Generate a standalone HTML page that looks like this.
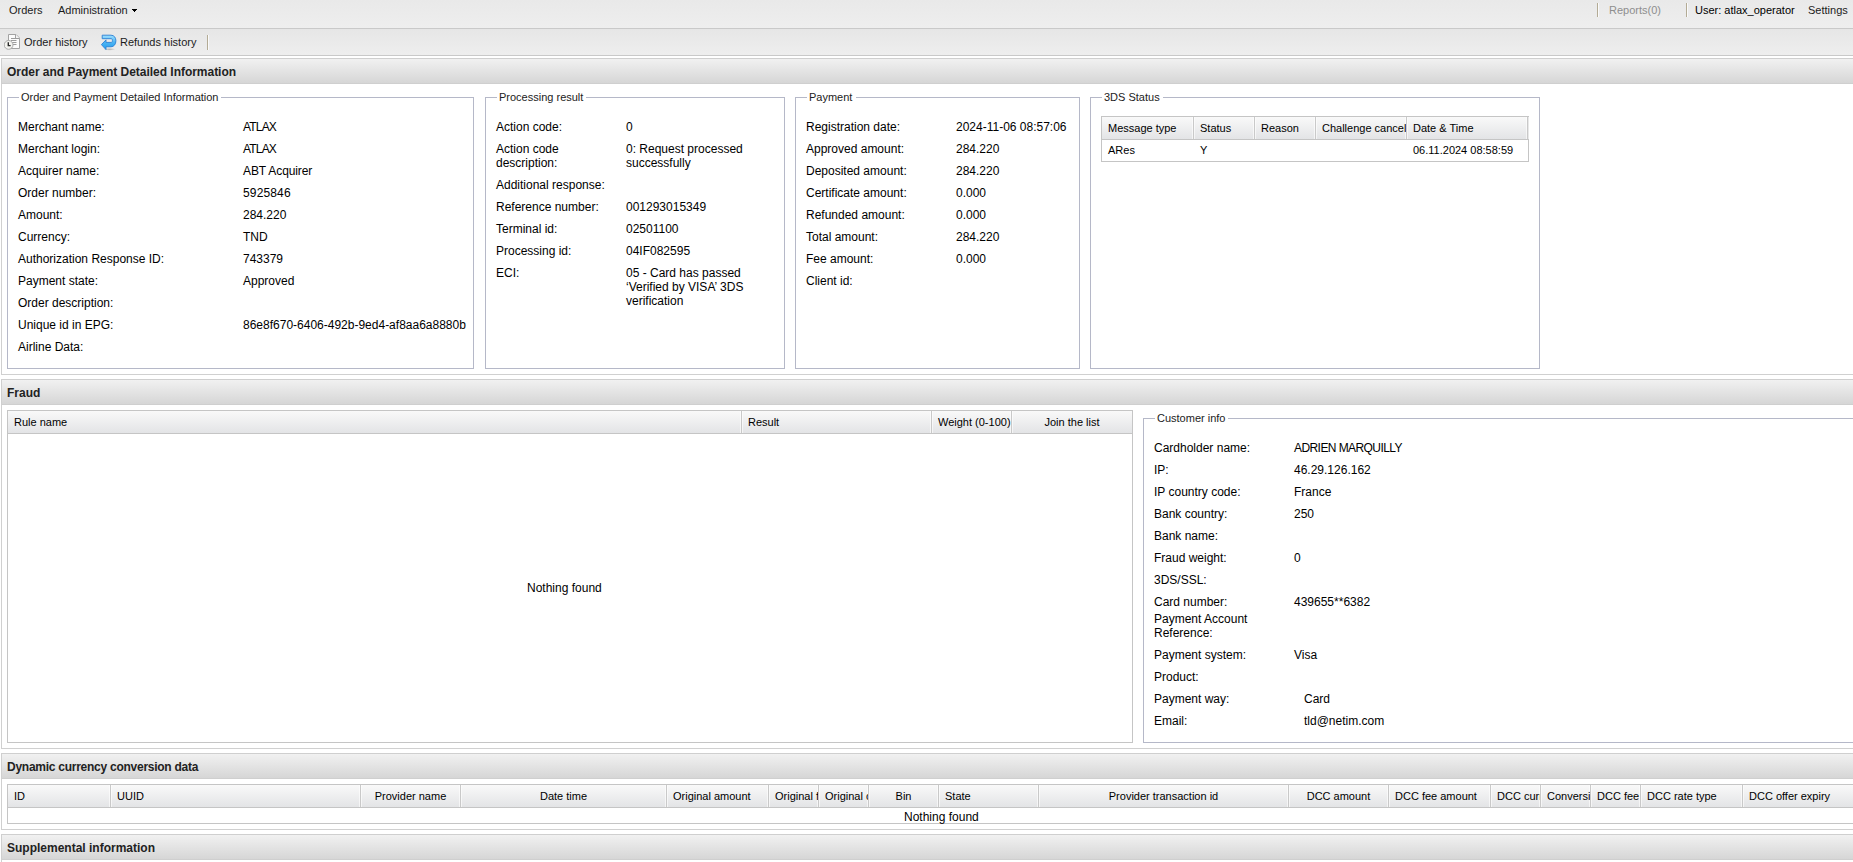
<!DOCTYPE html>
<html><head><meta charset="utf-8"><title>Order</title>
<style>
*{box-sizing:border-box}
html,body{margin:0;padding:0;background:#fff;width:1853px;height:862px;overflow:hidden;position:relative}
body{font-family:"Liberation Sans",sans-serif;font-size:12px;color:#000;line-height:14px}
.a{position:absolute;white-space:nowrap;line-height:14px}
.bx{position:absolute}
</style></head><body>
<div class="bx" style="left:0px;top:0px;width:1853px;height:28px;background:linear-gradient(#e9e9e9,#eeeeee)"></div>
<div class="bx" style="left:0px;top:28px;width:1853px;height:28px;border-top:1px solid #c9c9c9;border-bottom:1px solid #c9c9c9;background:linear-gradient(#e6e6e6,#eeeeee)"></div>
<div class="bx" style="left:1597px;top:3px;width:1px;height:14px;background:#b3ab95"></div>
<div class="bx" style="left:1598px;top:3px;width:1px;height:14px;background:#fafafa"></div>
<div class="bx" style="left:1686px;top:3px;width:1px;height:14px;background:#b3ab95"></div>
<div class="bx" style="left:1687px;top:3px;width:1px;height:14px;background:#fafafa"></div>
<div class="bx" style="left:207px;top:35px;width:1px;height:15px;background:#b3ab95"></div>
<div class="bx" style="left:208px;top:35px;width:1px;height:15px;background:#fafafa"></div>
<div class="bx" style="left:1px;top:58px;width:1852px;height:26px;border:1px solid #cfcfcf;border-right:none;background:linear-gradient(#f1f1f1,#d6d6d6)"></div>
<div class="bx" style="left:1px;top:84px;width:1852px;height:291px;border:1px solid #d0d0d0;border-top:none;border-right:none;background:#fff"></div>
<div class="bx" style="left:1px;top:379px;width:1852px;height:26px;border:1px solid #cfcfcf;border-right:none;background:linear-gradient(#f1f1f1,#d6d6d6)"></div>
<div class="bx" style="left:1px;top:405px;width:1852px;height:344px;border:1px solid #d0d0d0;border-top:none;border-right:none;background:#fff"></div>
<div class="bx" style="left:1px;top:753px;width:1852px;height:26px;border:1px solid #cfcfcf;border-right:none;background:linear-gradient(#f1f1f1,#d6d6d6)"></div>
<div class="bx" style="left:1px;top:779px;width:1852px;height:51px;border:1px solid #d0d0d0;border-top:none;border-right:none;background:#fff"></div>
<div class="bx" style="left:1px;top:834px;width:1852px;height:26px;border:1px solid #cfcfcf;border-right:none;background:linear-gradient(#f1f1f1,#d6d6d6)"></div>
<div class="bx" style="left:1px;top:860px;width:1852px;height:10px;border-left:1px solid #d0d0d0;background:#fff"></div>
<div class="bx" style="left:7px;top:97px;width:467px;height:272px;border:1px solid #b5b8c8;"></div>
<div class="bx" style="left:19px;top:95px;width:202px;height:4px;background:#fff"></div>
<div class="bx" style="left:485px;top:97px;width:300px;height:272px;border:1px solid #b5b8c8;"></div>
<div class="bx" style="left:497px;top:95px;width:89px;height:4px;background:#fff"></div>
<div class="bx" style="left:795px;top:97px;width:285px;height:272px;border:1px solid #b5b8c8;"></div>
<div class="bx" style="left:807px;top:95px;width:49px;height:4px;background:#fff"></div>
<div class="bx" style="left:1090px;top:97px;width:450px;height:272px;border:1px solid #b5b8c8;"></div>
<div class="bx" style="left:1102px;top:95px;width:61px;height:4px;background:#fff"></div>
<div class="bx" style="left:1143px;top:418px;width:718px;height:325px;border:1px solid #b5b8c8;border-right:none;"></div>
<div class="bx" style="left:1155px;top:416px;width:73px;height:4px;background:#fff"></div>
<div class="bx" style="left:1101px;top:116px;width:428px;height:46px;border:1px solid #c5c5c5;background:#fff;"></div>
<div class="bx" style="left:1102px;top:117px;width:426px;height:22px;background:linear-gradient(#f9f9f9,#e3e4e6)"></div>
<div class="bx" style="left:1102px;top:139px;width:426px;height:1px;background:#c5c5c5"></div>
<div class="bx" style="left:1192px;top:117px;width:1px;height:22px;background:rgba(255,255,255,0.6)"></div>
<div class="bx" style="left:1194px;top:117px;width:1px;height:22px;background:rgba(255,255,255,0.6)"></div>
<div class="bx" style="left:1193px;top:117px;width:1px;height:22px;background:#c9c9c9"></div>
<div class="bx" style="left:1253px;top:117px;width:1px;height:22px;background:rgba(255,255,255,0.6)"></div>
<div class="bx" style="left:1255px;top:117px;width:1px;height:22px;background:rgba(255,255,255,0.6)"></div>
<div class="bx" style="left:1254px;top:117px;width:1px;height:22px;background:#c9c9c9"></div>
<div class="bx" style="left:1314px;top:117px;width:1px;height:22px;background:rgba(255,255,255,0.6)"></div>
<div class="bx" style="left:1316px;top:117px;width:1px;height:22px;background:rgba(255,255,255,0.6)"></div>
<div class="bx" style="left:1315px;top:117px;width:1px;height:22px;background:#c9c9c9"></div>
<div class="bx" style="left:1405px;top:117px;width:1px;height:22px;background:rgba(255,255,255,0.6)"></div>
<div class="bx" style="left:1407px;top:117px;width:1px;height:22px;background:rgba(255,255,255,0.6)"></div>
<div class="bx" style="left:1406px;top:117px;width:1px;height:22px;background:#c9c9c9"></div>
<div class="bx" style="left:1526px;top:117px;width:1px;height:22px;background:rgba(255,255,255,0.6)"></div>
<div class="bx" style="left:1528px;top:117px;width:1px;height:22px;background:rgba(255,255,255,0.6)"></div>
<div class="bx" style="left:1527px;top:117px;width:1px;height:22px;background:#c9c9c9"></div>
<div class="a" style="left:1102px;top:121px;width:91px;overflow:hidden;font-size:11px;padding-left:6px">Message type</div>
<div class="a" style="left:1194px;top:121px;width:60px;overflow:hidden;font-size:11px;padding-left:6px">Status</div>
<div class="a" style="left:1255px;top:121px;width:60px;overflow:hidden;font-size:11px;padding-left:6px">Reason</div>
<div class="a" style="left:1316px;top:121px;width:90px;overflow:hidden;font-size:11px;padding-left:6px">Challenge cancel</div>
<div class="a" style="left:1407px;top:121px;width:120px;overflow:hidden;font-size:11px;padding-left:6px">Date &amp; Time</div>
<div class="a" style="left:1528px;top:121px;width:0px;overflow:hidden;font-size:11px;padding-left:6px"></div>
<div class="bx" style="left:7px;top:410px;width:1126px;height:333px;border:1px solid #c5c5c5;background:#fff;"></div>
<div class="bx" style="left:8px;top:411px;width:1124px;height:22px;background:linear-gradient(#f9f9f9,#e3e4e6)"></div>
<div class="bx" style="left:8px;top:433px;width:1124px;height:1px;background:#c5c5c5"></div>
<div class="bx" style="left:740px;top:411px;width:1px;height:22px;background:rgba(255,255,255,0.6)"></div>
<div class="bx" style="left:742px;top:411px;width:1px;height:22px;background:rgba(255,255,255,0.6)"></div>
<div class="bx" style="left:741px;top:411px;width:1px;height:22px;background:#c9c9c9"></div>
<div class="bx" style="left:930px;top:411px;width:1px;height:22px;background:rgba(255,255,255,0.6)"></div>
<div class="bx" style="left:932px;top:411px;width:1px;height:22px;background:rgba(255,255,255,0.6)"></div>
<div class="bx" style="left:931px;top:411px;width:1px;height:22px;background:#c9c9c9"></div>
<div class="bx" style="left:1010px;top:411px;width:1px;height:22px;background:rgba(255,255,255,0.6)"></div>
<div class="bx" style="left:1012px;top:411px;width:1px;height:22px;background:rgba(255,255,255,0.6)"></div>
<div class="bx" style="left:1011px;top:411px;width:1px;height:22px;background:#c9c9c9"></div>
<div class="a" style="left:8px;top:415px;width:733px;overflow:hidden;font-size:11px;padding-left:6px">Rule name</div>
<div class="a" style="left:742px;top:415px;width:189px;overflow:hidden;font-size:11px;padding-left:6px">Result</div>
<div class="a" style="left:932px;top:415px;width:79px;overflow:hidden;font-size:11px;padding-left:6px">Weight (0-100)</div>
<div class="a" style="left:1012px;top:415px;width:120px;overflow:hidden;font-size:11px;text-align:center">Join the list</div>
<div class="bx" style="left:7px;top:784px;width:1854px;height:40px;border:1px solid #c5c5c5;background:#fff;border-right:none;"></div>
<div class="bx" style="left:8px;top:785px;width:1853px;height:22px;background:linear-gradient(#f9f9f9,#e3e4e6)"></div>
<div class="bx" style="left:8px;top:807px;width:1853px;height:1px;background:#c5c5c5"></div>
<div class="bx" style="left:109px;top:785px;width:1px;height:22px;background:rgba(255,255,255,0.6)"></div>
<div class="bx" style="left:111px;top:785px;width:1px;height:22px;background:rgba(255,255,255,0.6)"></div>
<div class="bx" style="left:110px;top:785px;width:1px;height:22px;background:#c9c9c9"></div>
<div class="bx" style="left:359px;top:785px;width:1px;height:22px;background:rgba(255,255,255,0.6)"></div>
<div class="bx" style="left:361px;top:785px;width:1px;height:22px;background:rgba(255,255,255,0.6)"></div>
<div class="bx" style="left:360px;top:785px;width:1px;height:22px;background:#c9c9c9"></div>
<div class="bx" style="left:459px;top:785px;width:1px;height:22px;background:rgba(255,255,255,0.6)"></div>
<div class="bx" style="left:461px;top:785px;width:1px;height:22px;background:rgba(255,255,255,0.6)"></div>
<div class="bx" style="left:460px;top:785px;width:1px;height:22px;background:#c9c9c9"></div>
<div class="bx" style="left:665px;top:785px;width:1px;height:22px;background:rgba(255,255,255,0.6)"></div>
<div class="bx" style="left:667px;top:785px;width:1px;height:22px;background:rgba(255,255,255,0.6)"></div>
<div class="bx" style="left:666px;top:785px;width:1px;height:22px;background:#c9c9c9"></div>
<div class="bx" style="left:767px;top:785px;width:1px;height:22px;background:rgba(255,255,255,0.6)"></div>
<div class="bx" style="left:769px;top:785px;width:1px;height:22px;background:rgba(255,255,255,0.6)"></div>
<div class="bx" style="left:768px;top:785px;width:1px;height:22px;background:#c9c9c9"></div>
<div class="bx" style="left:817px;top:785px;width:1px;height:22px;background:rgba(255,255,255,0.6)"></div>
<div class="bx" style="left:819px;top:785px;width:1px;height:22px;background:rgba(255,255,255,0.6)"></div>
<div class="bx" style="left:818px;top:785px;width:1px;height:22px;background:#c9c9c9"></div>
<div class="bx" style="left:867px;top:785px;width:1px;height:22px;background:rgba(255,255,255,0.6)"></div>
<div class="bx" style="left:869px;top:785px;width:1px;height:22px;background:rgba(255,255,255,0.6)"></div>
<div class="bx" style="left:868px;top:785px;width:1px;height:22px;background:#c9c9c9"></div>
<div class="bx" style="left:937px;top:785px;width:1px;height:22px;background:rgba(255,255,255,0.6)"></div>
<div class="bx" style="left:939px;top:785px;width:1px;height:22px;background:rgba(255,255,255,0.6)"></div>
<div class="bx" style="left:938px;top:785px;width:1px;height:22px;background:#c9c9c9"></div>
<div class="bx" style="left:1037px;top:785px;width:1px;height:22px;background:rgba(255,255,255,0.6)"></div>
<div class="bx" style="left:1039px;top:785px;width:1px;height:22px;background:rgba(255,255,255,0.6)"></div>
<div class="bx" style="left:1038px;top:785px;width:1px;height:22px;background:#c9c9c9"></div>
<div class="bx" style="left:1287px;top:785px;width:1px;height:22px;background:rgba(255,255,255,0.6)"></div>
<div class="bx" style="left:1289px;top:785px;width:1px;height:22px;background:rgba(255,255,255,0.6)"></div>
<div class="bx" style="left:1288px;top:785px;width:1px;height:22px;background:#c9c9c9"></div>
<div class="bx" style="left:1387px;top:785px;width:1px;height:22px;background:rgba(255,255,255,0.6)"></div>
<div class="bx" style="left:1389px;top:785px;width:1px;height:22px;background:rgba(255,255,255,0.6)"></div>
<div class="bx" style="left:1388px;top:785px;width:1px;height:22px;background:#c9c9c9"></div>
<div class="bx" style="left:1489px;top:785px;width:1px;height:22px;background:rgba(255,255,255,0.6)"></div>
<div class="bx" style="left:1491px;top:785px;width:1px;height:22px;background:rgba(255,255,255,0.6)"></div>
<div class="bx" style="left:1490px;top:785px;width:1px;height:22px;background:#c9c9c9"></div>
<div class="bx" style="left:1539px;top:785px;width:1px;height:22px;background:rgba(255,255,255,0.6)"></div>
<div class="bx" style="left:1541px;top:785px;width:1px;height:22px;background:rgba(255,255,255,0.6)"></div>
<div class="bx" style="left:1540px;top:785px;width:1px;height:22px;background:#c9c9c9"></div>
<div class="bx" style="left:1589px;top:785px;width:1px;height:22px;background:rgba(255,255,255,0.6)"></div>
<div class="bx" style="left:1591px;top:785px;width:1px;height:22px;background:rgba(255,255,255,0.6)"></div>
<div class="bx" style="left:1590px;top:785px;width:1px;height:22px;background:#c9c9c9"></div>
<div class="bx" style="left:1639px;top:785px;width:1px;height:22px;background:rgba(255,255,255,0.6)"></div>
<div class="bx" style="left:1641px;top:785px;width:1px;height:22px;background:rgba(255,255,255,0.6)"></div>
<div class="bx" style="left:1640px;top:785px;width:1px;height:22px;background:#c9c9c9"></div>
<div class="bx" style="left:1741px;top:785px;width:1px;height:22px;background:rgba(255,255,255,0.6)"></div>
<div class="bx" style="left:1743px;top:785px;width:1px;height:22px;background:rgba(255,255,255,0.6)"></div>
<div class="bx" style="left:1742px;top:785px;width:1px;height:22px;background:#c9c9c9"></div>
<div class="a" style="left:8px;top:789px;width:102px;overflow:hidden;font-size:11px;padding-left:6px">ID</div>
<div class="a" style="left:111px;top:789px;width:249px;overflow:hidden;font-size:11px;padding-left:6px">UUID</div>
<div class="a" style="left:361px;top:789px;width:99px;overflow:hidden;font-size:11px;text-align:center">Provider name</div>
<div class="a" style="left:461px;top:789px;width:205px;overflow:hidden;font-size:11px;text-align:center">Date time</div>
<div class="a" style="left:667px;top:789px;width:101px;overflow:hidden;font-size:11px;padding-left:6px">Original amount</div>
<div class="a" style="left:769px;top:789px;width:49px;overflow:hidden;font-size:11px;padding-left:6px">Original fee</div>
<div class="a" style="left:819px;top:789px;width:49px;overflow:hidden;font-size:11px;padding-left:6px">Original currency</div>
<div class="a" style="left:869px;top:789px;width:69px;overflow:hidden;font-size:11px;text-align:center">Bin</div>
<div class="a" style="left:939px;top:789px;width:99px;overflow:hidden;font-size:11px;padding-left:6px">State</div>
<div class="a" style="left:1039px;top:789px;width:249px;overflow:hidden;font-size:11px;text-align:center">Provider transaction id</div>
<div class="a" style="left:1289px;top:789px;width:99px;overflow:hidden;font-size:11px;text-align:center">DCC amount</div>
<div class="a" style="left:1389px;top:789px;width:101px;overflow:hidden;font-size:11px;padding-left:6px">DCC fee amount</div>
<div class="a" style="left:1491px;top:789px;width:49px;overflow:hidden;font-size:11px;padding-left:6px">DCC currency</div>
<div class="a" style="left:1541px;top:789px;width:49px;overflow:hidden;font-size:11px;padding-left:6px">Conversion rate</div>
<div class="a" style="left:1591px;top:789px;width:49px;overflow:hidden;font-size:11px;padding-left:6px">DCC fee</div>
<div class="a" style="left:1641px;top:789px;width:101px;overflow:hidden;font-size:11px;padding-left:6px">DCC rate type</div>
<div class="a" style="left:1743px;top:789px;width:117px;overflow:hidden;font-size:11px;padding-left:6px">DCC offer expiry</div>

<div class="bx" style="left:132px;top:9px;width:5px;height:1px;background:#000"></div><div class="bx" style="left:133px;top:10px;width:3px;height:1px;background:#000"></div><div class="bx" style="left:134px;top:11px;width:1px;height:1px;background:#000"></div>
<svg class="bx" style="left:4px;top:34px" width="16" height="16" viewBox="0 0 16 16">
  <path d="M4.5 0.5H12L15.5 4V14.5H4.5Z" fill="#fcfcfc" stroke="#a3a3a3"/>
  <path d="M11.5 0.5V4.5H15.5" fill="#f4f4f4" stroke="#a3a3a3"/>
  <path d="M7 4.5H15M7 6.5H12.5M8 8.5H12.5M8 10.5H12.5" stroke="#9c9c9c"/>
  <circle cx="4.6" cy="10.9" r="4.4" fill="#f3f3ef" stroke="#a8a8a8"/>
  <path d="M4.3 8.2V11.6H6.6" stroke="#2a2a2a" stroke-width="1.4" fill="none"/>
</svg>
<svg class="bx" style="left:101px;top:34px" width="16" height="17" viewBox="0 0 16 17">
  <defs><linearGradient id="rg" x1="0" y1="0" x2="0" y2="1"><stop offset="0" stop-color="#9fe0ff"/><stop offset="0.5" stop-color="#4db4f2"/><stop offset="1" stop-color="#1f9ef0"/></linearGradient>
  <radialGradient id="sh"><stop offset="0" stop-color="#000" stop-opacity="0.25"/><stop offset="1" stop-color="#000" stop-opacity="0"/></radialGradient></defs>
  <ellipse cx="8.5" cy="15.3" rx="6" ry="1.4" fill="url(#sh)"/>
  <path d="M1.2 1.2H10C13.1 1.2 14.9 3.6 14.9 6.8C14.9 10.1 13 12.8 10 12.8H5V15.6L0.4 10.6L5 5.9V8.4H10.3C11.1 8.4 11.4 7.6 11.4 6.6C11.4 5.5 11 4.7 10.3 4.7H1.2Z" fill="url(#rg)" stroke="#2a7fd4" stroke-width="0.9" stroke-linejoin="round"/>
</svg>

<div class="a" style="left:9px;top:3px;font-size:11px;color:#1b1b1b">Orders</div>
<div class="a" style="left:58px;top:3px;font-size:11px;color:#1b1b1b">Administration</div>
<div class="a" style="left:1609px;top:3px;font-size:11px;color:#8e8e8e">Reports(0)</div>
<div class="a" style="left:1695px;top:3px;font-size:11px;color:#000">User: atlax_operator</div>
<div class="a" style="left:1808px;top:3px;font-size:11px;color:#1b1b1b">Settings</div>
<div class="a" style="left:24px;top:35px;font-size:11px;color:#1b1b1b">Order history</div>
<div class="a" style="left:120px;top:35px;font-size:11px;color:#1b1b1b">Refunds history</div>
<div class="a" style="left:7px;top:65px;font-weight:bold;color:#222;letter-spacing:-0.027px">Order and Payment Detailed Information</div>
<div class="a" style="left:7px;top:386px;font-weight:bold;color:#222">Fraud</div>
<div class="a" style="left:7px;top:760px;font-weight:bold;color:#222;letter-spacing:-0.258px">Dynamic currency conversion data</div>
<div class="a" style="left:7px;top:841px;font-weight:bold;color:#222">Supplemental information</div>
<div class="a" style="left:18px;top:120px">Merchant name:</div>
<div class="a" style="left:243px;top:120px;letter-spacing:-0.825px">ATLAX</div>
<div class="a" style="left:18px;top:142px">Merchant login:</div>
<div class="a" style="left:243px;top:142px;letter-spacing:-0.825px">ATLAX</div>
<div class="a" style="left:18px;top:164px">Acquirer name:</div>
<div class="a" style="left:243px;top:164px;letter-spacing:-0.109px">ABT Acquirer</div>
<div class="a" style="left:18px;top:186px">Order number:</div>
<div class="a" style="left:243px;top:186px;letter-spacing:0.150px">5925846</div>
<div class="a" style="left:18px;top:208px">Amount:</div>
<div class="a" style="left:243px;top:208px">284.220</div>
<div class="a" style="left:18px;top:230px">Currency:</div>
<div class="a" style="left:243px;top:230px">TND</div>
<div class="a" style="left:18px;top:252px">Authorization Response ID:</div>
<div class="a" style="left:243px;top:252px">743379</div>
<div class="a" style="left:18px;top:274px">Payment state:</div>
<div class="a" style="left:243px;top:274px">Approved</div>
<div class="a" style="left:18px;top:296px">Order description:</div>
<div class="a" style="left:18px;top:318px">Unique id in EPG:</div>
<div class="a" style="left:243px;top:318px">86e8f670-6406-492b-9ed4-af8aa6a8880b</div>
<div class="a" style="left:18px;top:340px">Airline Data:</div>
<div class="a" style="left:496px;top:120px">Action code:</div>
<div class="a" style="left:626px;top:120px">0</div>
<div class="a" style="left:496px;top:142px">Action code</div>
<div class="a" style="left:496px;top:156px">description:</div>
<div class="a" style="left:626px;top:142px">0: Request processed</div>
<div class="a" style="left:626px;top:156px">successfully</div>
<div class="a" style="left:496px;top:178px">Additional response:</div>
<div class="a" style="left:496px;top:200px">Reference number:</div>
<div class="a" style="left:626px;top:200px">001293015349</div>
<div class="a" style="left:496px;top:222px">Terminal id:</div>
<div class="a" style="left:626px;top:222px">02501100</div>
<div class="a" style="left:496px;top:244px">Processing id:</div>
<div class="a" style="left:626px;top:244px">04IF082595</div>
<div class="a" style="left:496px;top:266px">ECI:</div>
<div class="a" style="left:626px;top:266px">05 - Card has passed</div>
<div class="a" style="left:626px;top:280px">‘Verified by VISA’ 3DS</div>
<div class="a" style="left:626px;top:294px">verification</div>
<div class="a" style="left:806px;top:120px">Registration date:</div>
<div class="a" style="left:956px;top:120px">2024-11-06 08:57:06</div>
<div class="a" style="left:806px;top:142px">Approved amount:</div>
<div class="a" style="left:956px;top:142px">284.220</div>
<div class="a" style="left:806px;top:164px">Deposited amount:</div>
<div class="a" style="left:956px;top:164px">284.220</div>
<div class="a" style="left:806px;top:186px">Certificate amount:</div>
<div class="a" style="left:956px;top:186px">0.000</div>
<div class="a" style="left:806px;top:208px">Refunded amount:</div>
<div class="a" style="left:956px;top:208px">0.000</div>
<div class="a" style="left:806px;top:230px">Total amount:</div>
<div class="a" style="left:956px;top:230px">284.220</div>
<div class="a" style="left:806px;top:252px">Fee amount:</div>
<div class="a" style="left:956px;top:252px">0.000</div>
<div class="a" style="left:806px;top:274px">Client id:</div>
<div class="a" style="left:1108px;top:143px;font-size:11px">ARes</div>
<div class="a" style="left:1200px;top:143px;font-size:11px">Y</div>
<div class="a" style="left:1413px;top:143px;font-size:11px">06.11.2024 08:58:59</div>
<div class="a" style="left:527px;top:581px">Nothing found</div>
<div class="a" style="left:1154px;top:441px">Cardholder name:</div>
<div class="a" style="left:1294px;top:441px;letter-spacing:-0.573px">ADRIEN MARQUILLY</div>
<div class="a" style="left:1154px;top:463px">IP:</div>
<div class="a" style="left:1294px;top:463px">46.29.126.162</div>
<div class="a" style="left:1154px;top:485px">IP country code:</div>
<div class="a" style="left:1294px;top:485px">France</div>
<div class="a" style="left:1154px;top:507px">Bank country:</div>
<div class="a" style="left:1294px;top:507px">250</div>
<div class="a" style="left:1154px;top:529px">Bank name:</div>
<div class="a" style="left:1154px;top:551px">Fraud weight:</div>
<div class="a" style="left:1294px;top:551px">0</div>
<div class="a" style="left:1154px;top:573px">3DS/SSL:</div>
<div class="a" style="left:1154px;top:595px">Card number:</div>
<div class="a" style="left:1294px;top:595px">439655**6382</div>
<div class="a" style="left:1154px;top:648px">Payment system:</div>
<div class="a" style="left:1294px;top:648px">Visa</div>
<div class="a" style="left:1154px;top:670px">Product:</div>
<div class="a" style="left:1154px;top:692px">Payment way:</div>
<div class="a" style="left:1304px;top:692px">Card</div>
<div class="a" style="left:1154px;top:714px">Email:</div>
<div class="a" style="left:1304px;top:714px">tld@netim.com</div>
<div class="a" style="left:1154px;top:612px">Payment Account</div>
<div class="a" style="left:1154px;top:626px">Reference:</div>
<div class="a" style="left:904px;top:810px">Nothing found</div>
<div class="a" style="left:21px;top:90px;font-size:11px;color:#222">Order and Payment Detailed Information</div>
<div class="a" style="left:499px;top:90px;font-size:11px;color:#222">Processing result</div>
<div class="a" style="left:809px;top:90px;font-size:11px;color:#222">Payment</div>
<div class="a" style="left:1104px;top:90px;font-size:11px;color:#222">3DS Status</div>
<div class="a" style="left:1157px;top:411px;font-size:11px;color:#222">Customer info</div>
</body></html>
